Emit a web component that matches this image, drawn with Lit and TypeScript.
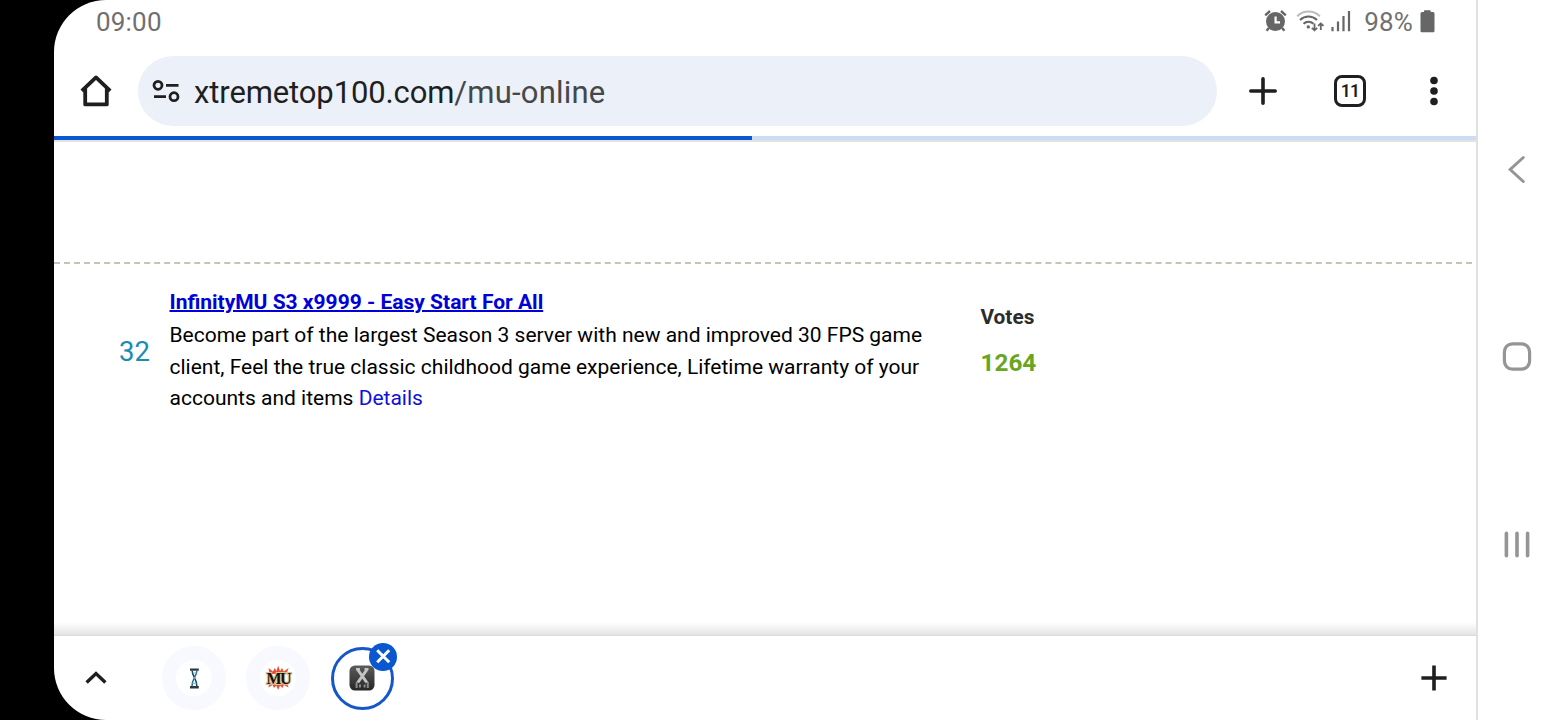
import { LitElement, css, html, svg } from "lit";
import { customElement, property } from "lit/decorators.js";
import { classMap } from "lit/directives/class-map.js";

const homeIcon = html`<svg width="32" height="32" viewBox="0 0 32 32">
  <path
    d="M1.8 15.8 16 2.4 30.2 15.8M5.2 13V29.4H26.8V13"
    fill="none"
    stroke="#1f1f1f"
    stroke-width="3.8"
    stroke-linejoin="round"
  />
</svg>`;

const siteIcon = html`<svg width="28" height="24" viewBox="0 0 28 24">
  <g fill="none" stroke="#1f1f1f" stroke-width="2.8">
    <circle cx="6" cy="6.3" r="4" />
    <path d="M14 6.3H26.5M2 17.7H14" />
    <circle cx="22" cy="17.7" r="4" />
  </g>
</svg>`;

const alarmIcon = html`<svg width="24" height="24" viewBox="0 0 24 24">
  <circle cx="11.5" cy="12.5" r="9.5" fill="#666" />
  <path
    d="M1.2 6.4 6 2M21.8 6.4 17 2M4.8 19 2.6 21.8M18.2 19 20.4 21.8"
    fill="none"
    stroke="#666"
    stroke-width="2.4"
  />
  <path d="M11.6 7.4V13.4H16" fill="none" stroke="#fff" stroke-width="2.2" />
</svg>`;

const wifiIcon = html`<svg width="30" height="24" viewBox="0 0 30 24">
  <g fill="none" stroke-width="2.1">
    <path d="M1.2 7.2C7.5 1 17.5 1 23.8 7.2" stroke="#bbb" />
    <path d="M4 10.9C9 6.3 16 6.3 21 10.9" stroke="#666" />
    <path d="M7.5 14.8C10.5 12.2 14.5 12.2 17.5 14.8" stroke="#666" />
    <path
      d="M18.5 14.5V21M15.8 18.8 18.5 21.3 21.2 18.8M24.8 21V14.5M22.1 16.9 24.8 14.4 27.5 16.9"
      stroke="#666"
      stroke-width="1.8"
    />
  </g>
  <circle cx="12.3" cy="17.9" r="1.7" fill="#666" />
</svg>`;

const signalIcon = html`<svg width="20" height="22" viewBox="0 0 20 22">
  <path
    d="M1.5 17V21.3M7 11.5V21.3M12.5 6V21.3M18 1V21.3"
    stroke="#666"
    stroke-width="2.2"
  />
</svg>`;

const batteryIcon = html`<svg width="15" height="23" viewBox="0 0 15 23">
  <path
    d="M4 1Q4 .3 4.7 .3H10Q10.7 .3 10.7 1V2H13Q14.5 2 14.5 3.5V21Q14.5 22.2 13.3 22.2H1.7Q.5 22.2 .5 21V3.5Q.5 2 2 2H4Z"
    fill="#666"
  />
</svg>`;

const hourglassLogo = svg`
  <g fill="none" stroke="#1d4053" stroke-width="1.5">
    <path d="M9 4.6H17.8M9 22.2H17.8" stroke="#2a3a44" stroke-width="2.4" />
    <path d="M11.2 6C11.2 11 15.9 14 15.8 21" />
    <path d="M15.8 6C15.8 11 10.9 14 11 21" stroke="#2b7393" />
    <path d="M11.8 8H15.2M12.4 12.8H14.8M11.6 18.4H15.4" stroke="#7fc0dc" stroke-width="1.2" />
  </g>`;

const muLogo = svg`
  <path d="M3.5 3 8 6.4 9.6 3 11.4 6 13.2 .8 15 6 17 3 18.8 6.4 23.6 3 21.4 9H4.6ZM4.6 17H21.4L23.6 22.6 18.8 20 17.4 23 15 20.4 13.2 25 11.2 20.4 9 23 7.6 20 3.4 22.6Z" fill="#e4503a" />
  <text class="mu" x="13.2" y="19" text-anchor="middle">MU</text>`;

const xLogo = svg`
  <defs>
    <linearGradient id="plate" x1="0" y1="0" x2="0" y2="1">
      <stop offset="0" stop-color="#5c5c5c" />
      <stop offset="1" stop-color="#262626" />
    </linearGradient>
  </defs>
  <rect x=".5" y=".5" width="25" height="25" rx="5.5" fill="url(#plate)" />
  <g fill="none" stroke="#c4c4c4" stroke-width="3">
    <path d="M7 4.2H11M15.5 4.2H19.5" stroke-width="2.2" />
    <path d="M8.6 4.5 17.8 17.5M18 4.5 8.8 17.5" />
    <path d="M7.6 17V23M11 19.5V22.5M15.6 19.5V22.5M18.8 17V23" stroke="#8c8c8c" stroke-width="2" />
  </g>`;

@customElement("tab-bubble")
class TabBubble extends LitElement {
  @property({ attribute: false }) logo;
  @property({ type: Boolean }) selected = false;

  static styles = css`
    :host {
      display: flex;
      align-items: center;
      justify-content: center;
      position: relative;
      width: 64px;
      height: 64px;
    }
    .bubble {
      box-sizing: border-box;
      width: 64px;
      height: 64px;
      border-radius: 50%;
      border: 14.5px solid #f7f9fe;
      background: #fff;
      display: flex;
      align-items: center;
      justify-content: center;
    }
    .bubble.is-selected {
      width: 63px;
      height: 63px;
      border: 3.5px solid #1556c8;
    }
    .logo {
      flex: none;
      overflow: visible;
    }
    .mu {
      font: bold 16px "Liberation Serif", serif;
      letter-spacing: -1.6px;
      fill: #15110d;
      stroke: #dcc398;
      stroke-width: 2.2px;
      paint-order: stroke;
    }
    .close {
      position: absolute;
      left: 38px;
      top: -4px;
    }
  `;

  render() {
    return html`
      <div class=${classMap({ bubble: true, "is-selected": this.selected })}>
        <svg class="logo" width="26" height="26" viewBox="0 0 26 26">
          ${this.logo}
        </svg>
      </div>
      ${this.selected
        ? html`<svg class="close" width="30" height="30" viewBox="0 0 30 30">
            <circle cx="15" cy="15" r="14" fill="#0b57d0" />
            <path
              d="M9.2 8.2 21.2 20.2M21.2 8.2 9.2 20.2"
              stroke="#fff"
              stroke-width="3"
            />
          </svg>`
        : ""}
    `;
  }
}

@customElement("app-root")
class AppRoot extends LitElement {
  @property({ type: Number }) progress = 49.1;
  @property({ type: Number }) tabCount = 11;

  static styles = css`
    :host {
      display: block;
      height: 720px;
      background: #000;
      font-family: Roboto, sans-serif;
    }
    svg {
      display: block;
      flex: none;
    }
    .screen {
      display: flex;
      height: 720px;
      margin-left: 54px;
      background: #fff;
      border-radius: 52px 0 0 52px;
      overflow: hidden;
    }
    .browser {
      flex: 1;
      display: flex;
      flex-direction: column;
      min-width: 0;
    }
    .status {
      box-sizing: border-box;
      height: 44px;
      padding: 0 41px 0 42px;
      display: flex;
      align-items: center;
      color: #707070;
      font-size: 26px;
      font-weight: 400;
      letter-spacing: 0.2px;
      white-space: nowrap;
    }
    .clock {
      flex: 1;
    }
    .indicators {
      display: flex;
      align-items: center;
    }
    .indicators svg {
      margin-top: -2px;
    }
    .wifi {
      margin-left: 8px;
    }
    .signal {
      margin-left: 5px;
    }
    .percent {
      margin: 0 7px 0 13px;
    }
    .toolbar {
      box-sizing: border-box;
      height: 92px;
      padding: 12px 32px 10px 26px;
      display: flex;
      align-items: center;
    }
    .omnibox {
      box-sizing: border-box;
      flex: none;
      width: 1079px;
      height: 70px;
      margin: 0 32px 0 26px;
      padding-left: 14px;
      border-radius: 35px;
      background: #ecf0f9;
      display: flex;
      align-items: center;
      gap: 14px;
    }
    .url {
      color: #1f1f1f;
      font-size: 31px;
      line-height: 36px;
      letter-spacing: -0.12px;
      padding-top: 3px;
      white-space: nowrap;
    }
    .path {
      color: #474747;
      letter-spacing: 0.2px;
    }
    .tabs {
      box-sizing: border-box;
      flex: none;
      width: 32px;
      height: 32px;
      margin: 0 60px 0 57px;
      border: 3.5px solid #1f1f1f;
      border-radius: 8px;
      display: flex;
      align-items: center;
      justify-content: center;
      color: #1f1f1f;
      font-size: 17.5px;
      font-weight: 600;
      letter-spacing: -0.8px;
    }
    .progress {
      height: 4px;
      background: #cddcf3;
      border-bottom: 2px solid #e0e2e4;
    }
    .bar {
      height: 4px;
      background: #0b57d0;
    }
    .page {
      flex: 1;
      display: flex;
      flex-direction: column;
    }
    .banner {
      height: 120px;
      width: 1418px;
      border-bottom: 2px dashed #c5c5b5;
    }
    .entry {
      flex: 1;
      display: flex;
      align-items: flex-start;
      white-space: nowrap;
    }
    .rank {
      width: 50.5px;
      padding: 70px 0 0 65px;
      color: #1a8cb4;
      font-size: 27.5px;
      line-height: 36px;
    }
    .info {
      width: 811px;
      padding-top: 22px;
      color: #000;
      font-size: 21px;
      line-height: 31.6px;
    }
    .title {
      display: block;
      margin-bottom: 1px;
      color: #0000d8;
      font-weight: 700;
      line-height: 33px;
      text-decoration-thickness: 2px;
    }
    .details {
      color: #1010d8;
      text-decoration: none;
    }
    .votes {
      padding-top: 41px;
      color: #2c2c2c;
      font-size: 20.8px;
      font-weight: 700;
      line-height: 24px;
    }
    .count {
      margin-top: 20px;
      color: #6aa522;
      font-size: 24.3px;
      line-height: 28px;
    }
    .shade {
      height: 14px;
      background: linear-gradient(#fff, #e4e4e4);
      border-bottom: 1px solid #dadada;
      box-sizing: border-box;
    }
    .strip {
      box-sizing: border-box;
      height: 84px;
      padding: 0 28px 0 31px;
      display: flex;
      align-items: center;
    }
    .bubbles {
      flex: 1;
      display: flex;
      gap: 20px;
      margin-left: 55px;
    }
    .system {
      box-sizing: border-box;
      width: 84px;
      padding: 154px 5px 160px 0;
      border-left: 2px solid #e0e0e0;
      display: flex;
      flex-direction: column;
      align-items: center;
      justify-content: space-between;
    }
  `;

  renderStatus() {
    return html`
      <div class="status">
        <span class="clock">09:00</span>
        <div class="indicators">
          ${alarmIcon}
          <span class="wifi">${wifiIcon}</span>
          <span class="signal">${signalIcon}</span>
          <span class="percent">98%</span>
          ${batteryIcon}
        </div>
      </div>
    `;
  }

  renderToolbar() {
    return html`
      <div class="toolbar">
        ${homeIcon}
        <div class="omnibox">
          ${siteIcon}
          <div class="url">
            xtremetop100.com<span class="path">/mu-online</span>
          </div>
        </div>
        <svg width="28" height="28" viewBox="0 0 28 28">
          <path
            d="M14 1.8V26.2M1.8 14H26.2"
            stroke="#1f1f1f"
            stroke-width="3.6"
            stroke-linecap="round"
          />
        </svg>
        <div class="tabs">${this.tabCount}</div>
        <svg width="16" height="32" viewBox="0 0 16 32">
          <g fill="#1f1f1f">
            <circle cx="8" cy="5.5" r="3.8" />
            <circle cx="8" cy="16" r="3.8" />
            <circle cx="8" cy="26.5" r="3.8" />
          </g>
        </svg>
      </div>
      <div class="progress">
        <div class="bar" style="width: ${this.progress}%"></div>
      </div>
    `;
  }

  renderPage() {
    return html`
      <div class="page">
        <div class="banner"></div>
        <div class="entry">
          <div class="rank">32</div>
          <div class="info">
            <a class="title" href="#">InfinityMU S3 x9999 - Easy Start For All</a>
            Become part of the largest Season 3 server with new and improved 30
            FPS game<br />
            client, Feel the true classic childhood game experience, Lifetime
            warranty of your<br />
            accounts and items <a class="details" href="#">Details</a>
          </div>
          <div class="votes">
            Votes
            <div class="count">1264</div>
          </div>
        </div>
        <div class="shade"></div>
      </div>
    `;
  }

  renderStrip() {
    return html`
      <div class="strip">
        <svg width="22" height="14" viewBox="0 0 22 14">
          <path
            d="M1.6 11.6 11 2.6 20.4 11.6"
            fill="none"
            stroke="#1f1f1f"
            stroke-width="3.4"
          />
        </svg>
        <div class="bubbles">
          <tab-bubble .logo=${hourglassLogo}></tab-bubble>
          <tab-bubble .logo=${muLogo}></tab-bubble>
          <tab-bubble .logo=${xLogo} selected></tab-bubble>
        </div>
        <svg width="28" height="28" viewBox="0 0 28 28">
          <path
            d="M14 1.4V26.6M1.4 14H26.6"
            stroke="#1f1f1f"
            stroke-width="3.6"
          />
        </svg>
      </div>
    `;
  }

  renderSystem() {
    return html`
      <div class="system">
        <svg width="32" height="32" viewBox="0 0 32 32">
          <path
            d="M22.3 3.5 9.2 15.5 22.3 27.5"
            fill="none"
            stroke="#959595"
            stroke-width="3"
            stroke-linecap="round"
          />
        </svg>
        <svg width="32" height="32" viewBox="0 0 32 32">
          <rect
            x="3.4"
            y="2.9"
            width="25.2"
            height="25.2"
            rx="8"
            fill="none"
            stroke="#959595"
            stroke-width="3.2"
          />
        </svg>
        <svg width="32" height="32" viewBox="0 0 32 32">
          <path
            d="M5.4 5.3V27.7M16 5.3V27.7M26.6 5.3V27.7"
            stroke="#959595"
            stroke-width="3.6"
            stroke-linecap="round"
          />
        </svg>
      </div>
    `;
  }

  render() {
    return html`
      <div class="screen">
        <div class="browser">
          ${this.renderStatus()} ${this.renderToolbar()} ${this.renderPage()}
          ${this.renderStrip()}
        </div>
        ${this.renderSystem()}
      </div>
    `;
  }
}

export default AppRoot;
